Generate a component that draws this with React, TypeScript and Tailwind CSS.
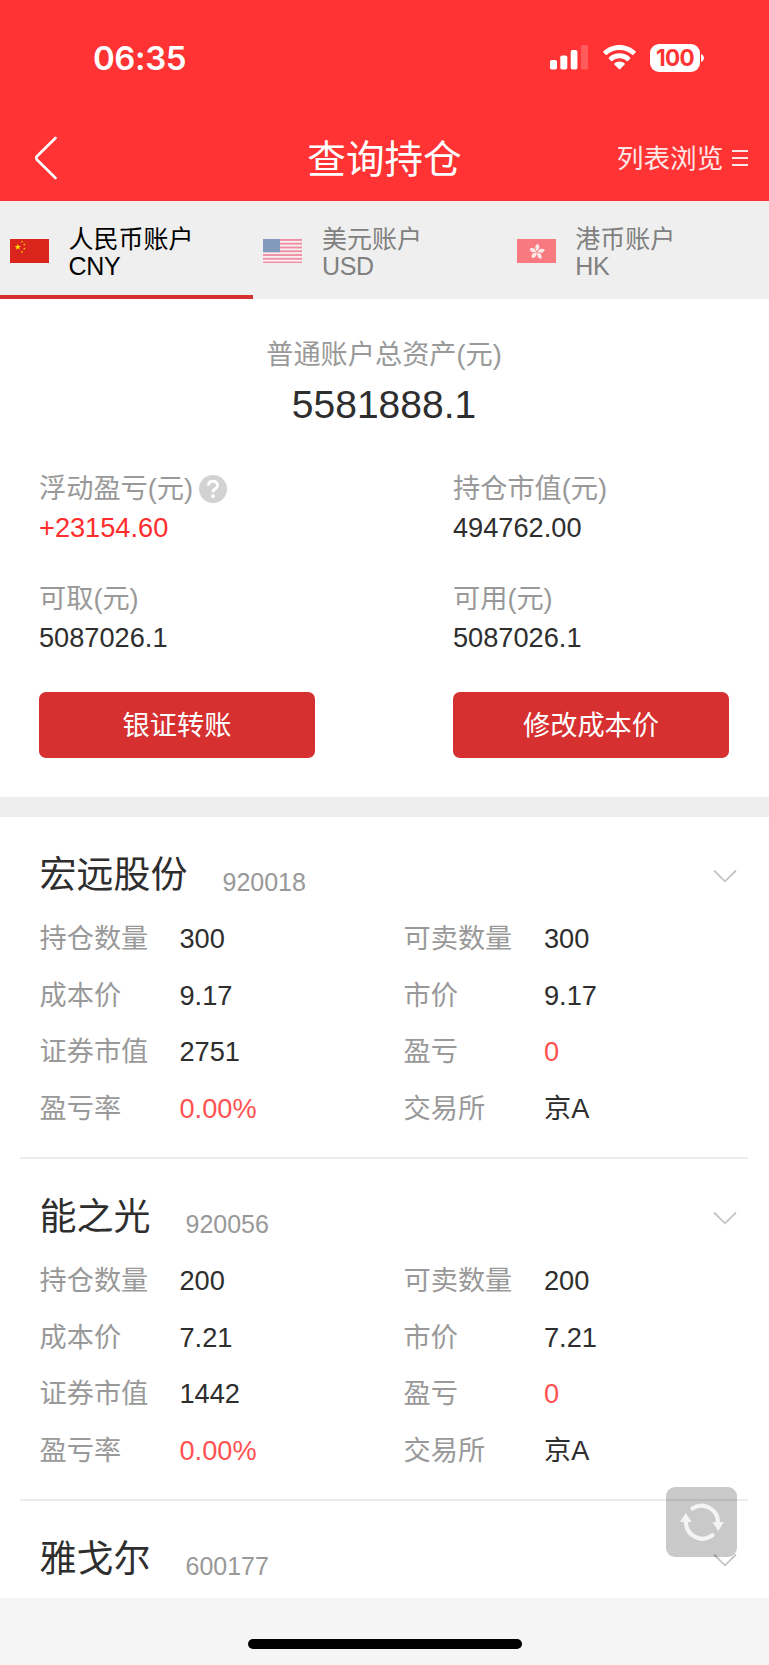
import type { ReactNode } from "react";

type Holding = {
  name: string;
  code: string;
  rows?: [string, string, string, string][];
};

const HOLDINGS: Holding[] = [
  {
    name: "宏远股份",
    code: "920018",
    rows: [
      ["持仓数量", "300", "可卖数量", "300"],
      ["成本价", "9.17", "市价", "9.17"],
      ["证券市值", "2751", "盈亏", "0"],
      ["盈亏率", "0.00%", "交易所", "京A"],
    ],
  },
  {
    name: "能之光",
    code: "920056",
    rows: [
      ["持仓数量", "200", "可卖数量", "200"],
      ["成本价", "7.21", "市价", "7.21"],
      ["证券市值", "1442", "盈亏", "0"],
      ["盈亏率", "0.00%", "交易所", "京A"],
    ],
  },
  { name: "雅戈尔", code: "600177" },
];

const RED_LABELS = ["盈亏", "盈亏率"];

function FlagCN() {
  const star = "M0-1L.2245-.309.951-.309.363.118.588.809 0 .382-.588.809-.363.118-.951-.309-.2245-.309Z";
  return (
    <svg viewBox="0 0 39 24.5" className="h-[24.5px] w-[39px]">
      <rect width="39" height="24.5" fill="#da251c" />
      <g fill="#ffe600">
        <path d={star} transform="translate(7.8 8) scale(3.3)" />
        <path d={star} transform="translate(12 2.8) scale(1.3)" />
        <path d={star} transform="translate(14.3 5.6) scale(1.3)" />
        <path d={star} transform="translate(14.3 9.6) scale(1.3)" />
        <path d={star} transform="translate(12 13) scale(1.3)" />
      </g>
    </svg>
  );
}

function FlagUS() {
  const stripes = [0, 2, 4, 6, 8, 10, 12];
  return (
    <svg viewBox="0 0 39 24.5" className="h-[24.5px] w-[39px]">
      <rect width="39" height="24.5" fill="#f6eff1" />
      {stripes.map((n) => (
        <rect key={n} y={n * 1.885} width="39" height="1.885" fill="#f08fa3" />
      ))}
      <rect width="17" height="13.2" fill="#829bbd" />
    </svg>
  );
}

function FlagHK() {
  return (
    <svg viewBox="0 0 39 24.5" className="h-[24.5px] w-[39px]">
      <rect width="39" height="24.5" fill="#f8797f" />
      <g transform="translate(20 12.8)" fill="#fbe9ea">
        {[8, 80, 152, 224, 296].map((deg) => (
          <path
            key={deg}
            d="M0-.6C-2.6-2.4-3.4-6-.4-8C1.2-7 2.4-5 1.2-3C.8-2.2 .3-1.4 0-.6Z"
            transform={`rotate(${deg})`}
          />
        ))}
      </g>
    </svg>
  );
}

function StatusIcons() {
  return (
    <div className="flex items-center">
      <svg viewBox="0 0 38 25" className="h-[25px] w-[38px]" fill="#fff">
        <rect x="0" y="15" width="7" height="9.5" rx="1.8" />
        <rect x="10.3" y="10.5" width="7" height="14" rx="1.8" />
        <rect x="20.7" y="5" width="6.7" height="19.5" rx="1.8" />
        <rect x="31" y="0" width="7" height="24.5" rx="1.8" opacity="0.2" />
      </svg>
      <svg viewBox="0 0 33 25" className="ml-[14.5px] h-[25px] w-[33px]" fill="#fff">
        <path d="M16.5 0C22.8 0 28.5 2.4 32.6 6.3C33 6.7 33 7.2 32.6 7.6L30.4 9.8C30 10.2 29.5 10.2 29.1 9.8C25.8 6.8 21.4 5 16.5 5S7.2 6.8 3.9 9.8C3.5 10.2 3 10.2 2.6 9.8L.4 7.6C0 7.2 0 6.7 .4 6.3C4.5 2.4 10.2 0 16.5 0Z" />
        <path d="M16.5 8.3C20.6 8.3 24.3 9.8 27.1 12.4C27.5 12.8 27.5 13.3 27.1 13.7L24.9 15.9C24.5 16.3 24 16.3 23.6 15.9C21.7 14.2 19.2 13.2 16.5 13.2S11.3 14.2 9.4 15.9C9 16.3 8.5 16.3 8.1 15.9L5.9 13.7C5.5 13.3 5.5 12.8 5.9 12.4C8.7 9.8 12.4 8.3 16.5 8.3Z" />
        <path d="M16.5 16.5C18.4 16.5 20.2 17.2 21.5 18.3C22 18.7 22 19.2 21.6 19.6L17.2 24C16.8 24.4 16.2 24.4 15.8 24L11.4 19.6C11 19.2 11 18.7 11.5 18.3C12.8 17.2 14.6 16.5 16.5 16.5Z" />
      </svg>
      <div className="ml-[14.5px] flex h-[28px] w-[50px] items-center justify-center rounded-[9px] bg-white font-['Inter'] text-[22.5px] font-bold tracking-[-0.7px] text-[#ff3333]">
        100
      </div>
      <svg viewBox="0 0 3 8" className="ml-[1px] h-[8px] w-[3px]" fill="#fff">
        <path d="M0 0C4 1.5 4 6.5 0 8Z" />
      </svg>
    </div>
  );
}

function Tab({ flag, title, unit, active }: { flag: ReactNode; title: string; unit: string; active?: boolean }) {
  return (
    <div
      className={`flex h-full w-[253.4px] border-b-4 pt-[25px] pl-[10px] text-[25px] leading-[27px] ${
        active ? "border-[#d63031] text-black" : "border-transparent text-[#808080]"
      }`}
    >
      <div className="pt-[12.5px]">{flag}</div>
      <div className="pl-[19.5px]">
        <div>{title}</div>
        <div className="tracking-[-0.3px]">{unit}</div>
      </div>
    </div>
  );
}

function Metric({ label, value, red, help }: { label: string; value: string; red?: boolean; help?: boolean }) {
  return (
    <div className="w-[276px] leading-[39px]">
      <div className="flex items-center text-[#999]">
        {label}
        {help && (
          <svg viewBox="0 0 28 28" className="ml-[6px] h-[28px] w-[28px]" fill="none">
            <circle cx="14" cy="14" r="14" fill="#d2d2d2" />
            <path
              d="M9.3 10.6C9.5 7.8 11.4 6.2 14 6.2C16.7 6.2 18.6 7.8 18.6 10.2C18.6 12 17.5 12.9 16.2 13.8C14.7 14.8 14 15.5 14 17.3"
              stroke="#fff"
              strokeWidth="2.9"
            />
            <circle cx="14" cy="21.2" r="1.9" fill="#fff" />
          </svg>
        )}
      </div>
      <div className={red ? "text-[#ff2d2d]" : ""}>{value}</div>
    </div>
  );
}

function HoldingCard({ item }: { item: Holding }) {
  return (
    <section
      className={`mr-[21px] ml-[20px] pr-[19px] pl-[19.5px] pt-[32px] ${
        item.rows ? "h-[342px] border-b-2 border-[#ececec]" : ""
      }`}
    >
      <div className="flex h-[50px] items-center">
        <h2 className="pt-[4px] text-[37px] leading-[50px]">{item.name}</h2>
        <span className="pt-[15px] pl-[35px] text-[25px] leading-[30px] text-[#999]">{item.code}</span>
        <svg
          viewBox="0 0 24 14"
          className="mt-[3px] mr-[-8px] ml-auto h-[14px] w-[24px]"
          fill="none"
          stroke="#c4c4c4"
          strokeWidth="1.8"
        >
          <path d="M1 1.5L12 12.3L23 1.5" />
        </svg>
      </div>
      <div className="mt-[12px]">
        {item.rows?.map(([l1, v1, l2, v2]) => (
          <div key={l1} className="grid h-[56.7px] grid-cols-[140px_224px_140.5px_1fr] items-center">
            <span className="text-[#999]">{l1}</span>
            <span className={RED_LABELS.includes(l1) ? "text-[#ff5252]" : ""}>{v1}</span>
            <span className="text-[#999]">{l2}</span>
            <span className={RED_LABELS.includes(l2) ? "text-[#ff5252]" : ""}>{v2}</span>
          </div>
        ))}
      </div>
    </section>
  );
}

export default function App() {
  return (
    <main className="relative flex h-[1665px] w-[769px] flex-col overflow-hidden bg-white font-['Liberation_Sans','Noto_Sans_CJK_SC',sans-serif] text-[27.2px] text-[#2e2e2e]">
      <header className="h-[201px] shrink-0 bg-[#ff3333] text-white">
        <div className="flex h-[115px] items-center justify-between pr-[65px] pl-[93px]">
          <span className="pt-[1px] font-['Inter'] text-[33px] leading-none font-semibold tracking-[-0.4px]">06:35</span>
          <StatusIcons />
        </div>
        <div className="grid h-[86px] grid-cols-[1fr_auto_1fr] items-center px-[20px]">
          <svg
            viewBox="0 0 24 44"
            className="ml-[14px] h-[44px] w-[24px]"
            fill="none"
            stroke="#fff"
            strokeWidth="2.6"
            strokeLinecap="round"
            strokeLinejoin="round"
          >
            <path d="M21.5 2L3 20.2Q1.5 22 3 23.8L21.5 42" />
          </svg>
          <h1 className="pt-[4px] text-[38.6px] leading-[50px]">查询持仓</h1>
          <div className="flex items-center justify-end pt-[1px] pr-[1px] text-[26.7px] text-[#ffe6e6]">
            <span className="pt-[1px]">列表浏览</span>
            <svg viewBox="0 0 16 18" className="ml-[8.5px] h-[18px] w-[16px]" stroke="#ffe6e6" strokeWidth="2.2">
              <path d="M0 2H16M0 9H16M0 16H16" />
            </svg>
          </div>
        </div>
      </header>

      <nav className="flex h-[98px] shrink-0 bg-[#efefef]">
        <Tab flag={<FlagCN />} title="人民币账户" unit="CNY" active />
        <Tab flag={<FlagUS />} title="美元账户" unit="USD" />
        <Tab flag={<FlagHK />} title="港币账户" unit="HK" />
      </nav>

      <section className="flex h-[498px] shrink-0 flex-col pt-[41px] pr-[40px] pl-[39px]">
        <p className="text-center leading-[30px] text-[#999]">普通账户总资产(元)</p>
        <p className="mt-[13px] text-center text-[39px] leading-[44px]">5581888.1</p>
        <div className="mt-[42px] flex justify-between">
          <Metric label="浮动盈亏(元)" value="+23154.60" red help />
          <Metric label="持仓市值(元)" value="494762.00" />
        </div>
        <div className="mt-[31.5px] flex justify-between">
          <Metric label="可取(元)" value="5087026.1" />
          <Metric label="可用(元)" value="5087026.1" />
        </div>
        <div className="mt-[35px] flex justify-between text-white">
          <button className="h-[66px] w-[276px] rounded-[7px] bg-[#d63031] pt-[4px]">银证转账</button>
          <button className="h-[66px] w-[276px] rounded-[7px] bg-[#d63031] pt-[4px]">修改成本价</button>
        </div>
      </section>

      <div className="h-[20px] shrink-0 bg-[#eee]" />

      <div className="h-[781px] shrink-0 overflow-hidden">
        {HOLDINGS.map((item) => (
          <HoldingCard key={item.code} item={item} />
        ))}
      </div>

      {/* Home indicator */}
      <footer className="flex grow justify-center bg-[#f5f5f5] pt-[41px]">
        <div className="h-[10px] w-[274px] rounded-full bg-black" />
      </footer>

      {/* Floating refresh button */}
      <button className="absolute top-[1487px] left-[666px] flex h-[70px] w-[71px] items-center justify-center rounded-[9px] bg-black/21">
        <svg viewBox="0 0 44 40" className="h-[40px] w-[44px]" fill="none" stroke="#f4f4f4" strokeWidth="4.2">
          <path d="M12.5 6.5A16.5 16.5 0 0 1 38 20" strokeLinecap="round" />
          <path d="M32.5 33.2A16.5 16.5 0 0 1 6 20" strokeLinecap="round" />
          <path d="M32.5 20H44L38.2 29Z" fill="#f4f4f4" stroke="none" />
          <path d="M0 20H11.5L5.8 11Z" fill="#f4f4f4" stroke="none" />
        </svg>
      </button>
    </main>
  );
}
